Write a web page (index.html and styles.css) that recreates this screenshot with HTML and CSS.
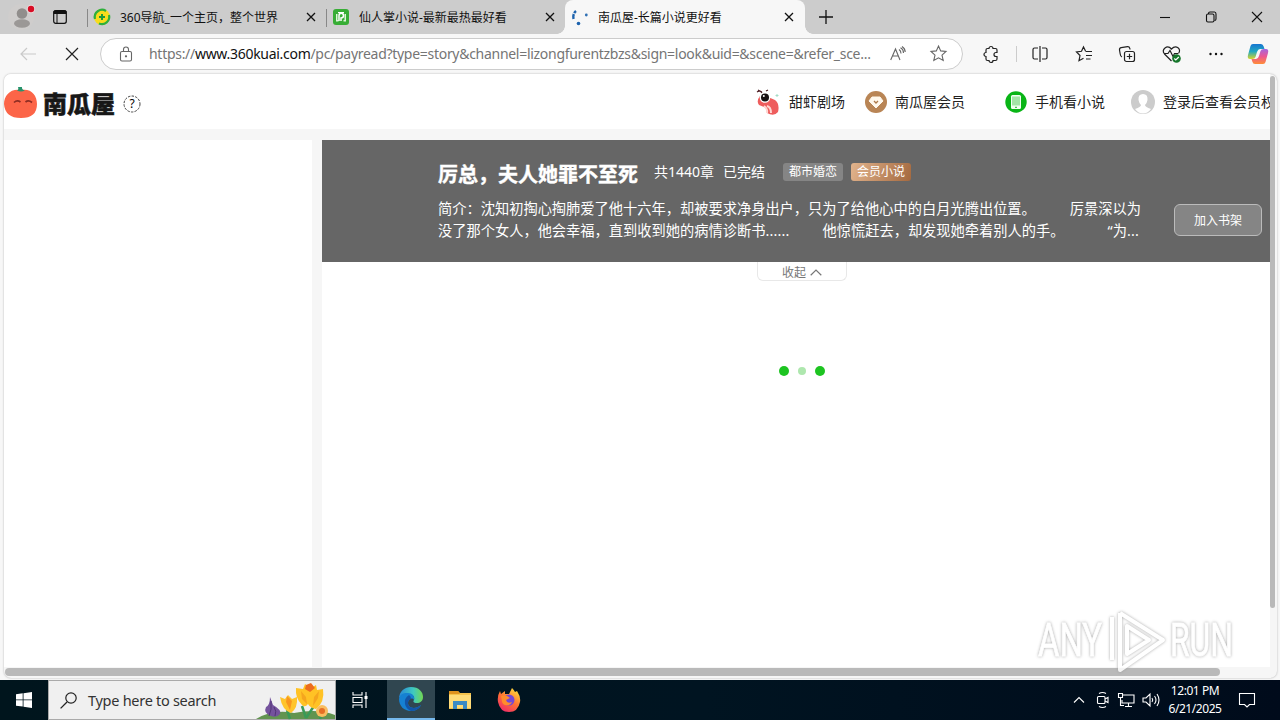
FILE: index.html
```html
<!DOCTYPE html>
<html lang="zh-CN">
<head>
<meta charset="utf-8">
<title>南瓜屋-长篇小说更好看</title>
<link rel="stylesheet" href="styles.css">
</head>
<body>
<header class="tabs">
  <div class="tab-tools">
    <svg class="profile" width="28" height="28" viewBox="0 0 28 28"><circle cx="14" cy="14" r="13" fill="#cfcdcc"/><circle cx="15" cy="10.500" r="5.300" fill="#918e8c"/><ellipse cx="15" cy="20.500" rx="8" ry="4.200" fill="#9b9896"/><circle cx="24" cy="6" r="4.200" fill="#eadada"/><circle cx="24" cy="6" r="3.200" fill="#d80d25"/></svg>
    <svg class="tabmenu" width="14" height="14" viewBox="0 0 14 14"><rect x=".7" y=".7" width="12.600" height="12.600" rx="2" fill="none" stroke="#111" stroke-width="1.200"/><path d="M1 1h12v2.500H1zM4 4v9" fill="#111" stroke="#111"/></svg>
  </div>
  <div class="tab tab-one">
    <svg width="16" height="16" viewBox="0 0 16 16"><circle cx="8" cy="8" r="8" fill="#f7dc1b"/><path d="M1 10A7.300 7.300 0 0 1 12 2" fill="none" stroke="#2eaf3c" stroke-width="2.200"/><path d="M15 6A7.300 7.300 0 0 1 5 14.500" fill="none" stroke="#2eaf3c" stroke-width="2.200"/><path d="M8 5v6M5 8h6" stroke="#1c9b39" stroke-width="2"/></svg>
    <span class="tab-title">360导航_一个主页，整个世界</span>
    <svg class="close" width="10" height="10" viewBox="0 0 10 10"><path d="M1 1l8 8M9 1L1 9"/></svg>
  </div>
  <div class="tab tab-two">
    <svg width="16" height="16" viewBox="0 0 16 16"><rect width="16" height="16" rx="3" fill="#37ad35"/><path d="M3 5h1.500V12H3zM11.500 5H13v7h-1.500zM3 11h2.500v1.500H3zM10.500 11H13v1.500h-2.500z" fill="#dff6d9"/><path d="M6 12V6.500a2 2 0 0 1 4.500 0Q10.500 9 8 9v3" fill="none" stroke="#fff" stroke-width="1.500"/><path d="M5 3h6v1.200H5z" fill="#fff"/></svg>
    <span class="tab-title">仙人掌小说-最新最热最好看</span>
    <svg class="close" width="10" height="10" viewBox="0 0 10 10"><path d="M1 1l8 8M9 1L1 9"/></svg>
  </div>
  <div class="tab tab-active">
    <svg width="18" height="18" viewBox="0 0 18 18"><path d="M2.500 11Q1.500 6 5 3" fill="none" stroke="#1d63ae" stroke-width="2.400" stroke-dasharray="5 1"/><circle cx="7.500" cy="15.500" r="1.800" fill="#1d63ae"/><circle cx="15.300" cy="7" r="1.400" fill="#2f70b4"/></svg>
    <span class="tab-title">南瓜屋-长篇小说更好看</span>
    <svg class="close" width="10" height="10" viewBox="0 0 10 10"><path d="M1 1l8 8M9 1L1 9"/></svg>
  </div>
  <svg class="newtab" width="14" height="14" viewBox="0 0 14 14"><path d="M7 0v14M0 7h14"/></svg>
  <div class="window-controls">
    <svg width="12" height="12" viewBox="0 0 12 12"><path d="M1 6.500h10"/></svg>
    <svg width="12" height="12" viewBox="0 0 12 12"><rect x="1.500" y="3" width="7.500" height="8" rx="1.500"/><path d="M3.500 3V2.500Q3.500 1 5 1h4.500Q11 1 11 3v5q0 1.500-1.500 1.500"/></svg>
    <svg width="12" height="12" viewBox="0 0 12 12"><path d="M1 1l10 10M11 1L1 11"/></svg>
  </div>
</header>
<div class="toolbar">
  <svg class="back" width="16" height="14" viewBox="0 0 16 14"><path d="M7 1L1 7l6 6M1 7h15"/></svg>
  <svg class="stop" width="14" height="14" viewBox="0 0 14 14"><path d="M1 1l12 12M13 1L1 13"/></svg>
  <div class="address">
    <svg class="lock" width="14" height="16" viewBox="0 0 14 16"><rect x="1.500" y="5.500" width="11" height="9.500" rx="1.500"/><path d="M4.500 5.500V3.500a2.500 2.500 0 0 1 5 0v2"/><circle cx="7" cy="10.300" r=".6" fill="#555"/></svg>
    <span class="url">https://<b>www.360kuai.com</b>/pc/payread?type=story&amp;channel=lizongfurentzbzs&amp;sign=look&amp;uid=&amp;scene=&amp;refer_sce...</span>
    <svg class="read" width="16" height="15" viewBox="0 0 16 15"><path d="M.7 14L5.500 3 10 14M2.500 10h6M9 3.500q2 1.200 2 4M10.500 1.800q3 1.500 3 5.200M12 .5q3.200 2 3.200 5.500"/></svg>
    <svg class="star" width="17" height="17" viewBox="0 0 17 17"><path d="M8.500 1l2.200 4.900 5.300.6-4 3.600 1.200 5.400-4.700-2.700-4.700 2.700L5 10.100 1 6.500l5.300-.6z"/></svg>
  </div>
  <div class="actions">
    <svg width="18" height="18" viewBox="0 0 18 18"><path d="M5.500 3.500H7a2 2 0 0 1 4 0h2.500Q15 3.500 15 5v2.500h-1a2 2 0 0 0 0 4h1V14q0 1.500-1.500 1.500H11a2 2 0 0 1-4 0H5.500Q4 15.500 4 14v-2.500a2 2 0 0 1 0-4V5q0-1.500 1.500-1.500z"/></svg>
    <i class="divider"></i>
    <svg width="18" height="18" viewBox="0 0 18 18"><path d="M7 3H3.500Q2 3 2 4.500v8Q2 14 3.500 14H7M11 3h3.500Q16 3 16 4.500v8q0 1.500-1.500 1.500H11M9 1v16"/></svg>
    <svg width="18" height="18" viewBox="0 0 18 18"><path d="M10.500 6L8.500 2 6.500 6.300 1.500 7 5 10.500 4 15.700l4.500-2.500M10.500 6.500H17M11 10.500h6M11 14h4.500"/></svg>
    <svg width="18" height="18" viewBox="0 0 18 18"><rect x="6.500" y="6.500" width="10" height="10" rx="2"/><path d="M11.500 8.800v5.400M8.800 11.500h5.400M4 12Q2.500 11.500 2.200 9L1.500 5q-.2-2 1.700-2.300L9.500 1.600q1.800-.2 2.300 1.700L12 4.500"/></svg>
    <svg width="20" height="18" viewBox="0 0 20 18"><path d="M9.500 16L2.500 9C-1 4.500 5-1 9.500 4 14-1 20 4 16.500 8.500M2 8.500h4l2-3 3 6 1.500-3H16"/><circle cx="14.500" cy="13.500" r="4.300" fill="#16762b" stroke="none"/><path d="M12.300 13.500l1.500 1.500 3-3" stroke="#fff"/></svg>
    <svg width="18" height="18" viewBox="0 0 18 18"><g fill="#111" stroke="none"><circle cx="3.500" cy="9" r="1.200"/><circle cx="9" cy="9" r="1.200"/><circle cx="14.500" cy="9" r="1.200"/></g></svg>
    <svg class="copilot" width="22" height="22" viewBox="0 0 22 22"><defs><linearGradient id="cpA" x2="0" y2="1"><stop stop-color="#1675d1"/><stop offset=".5" stop-color="#22a9c0"/><stop offset="1" stop-color="#d8d52b"/></linearGradient><linearGradient id="cpB" x2="0" y2="1"><stop stop-color="#a465df"/><stop offset=".5" stop-color="#ec5792"/><stop offset="1" stop-color="#ff8d36"/></linearGradient></defs><g stroke="none"><path d="M6 1h8q2 0 2.700 2.500L17.500 6H13q-2 0-3 3l-1.500 5Q8 16 5 16H3q-3 0-2-4L3.500 3Q4 1 6 1z" fill="url(#cpA)"/><path d="M16 21H8q-2 0-2.700-2.500L4.500 16H9q2 0 3-3l1.500-5Q14 6 17 6h2q3 0 2 4l-2.500 9Q18 21 16 21z" fill="url(#cpB)"/></g></svg>
  </div>
</div>
<div class="frame">
  <div class="page">
    <div class="site-header">
      <svg class="pumpkin" width="34" height="34" viewBox="0 0 34 34"><path d="M17 4C27 2 33 9 33 18q0 14-16 14T0 18C0 9 7 2 17 4z" fill="#fc6548"/><path d="M13 4.500Q15 3.500 14 1h4q-.5 2.500 3 3.500-4 2-8 0z" fill="#28936c"/><path d="M10 16.500q3-3 6.500-.5M21.500 16q3-2.500 6.500.5" fill="none" stroke="#8f2d23" stroke-width="1.700"/></svg>
      <span class="brand">南瓜屋</span>
      <svg class="help" width="18" height="18" viewBox="0 0 18 18"><circle cx="9" cy="9" r="8" fill="none" stroke="#444" stroke-dasharray="2.500 1.200"/><text x="9" y="13" text-anchor="middle">?</text></svg>
      <nav class="site-nav">
        <a class="nav-shrimp"><svg width="26" height="28" viewBox="0 0 26 28"><path d="M5 8Q1 13 4 17l5 2q2 0 3 6 7 4 11-1 2-8-3-12l-7-3z" fill="#ee5d5d"/><path d="M12 18q4 1 4 7M9 18q4 3 3 7" stroke="#ffd7d2" stroke-width="2" fill="none"/><circle cx="10" cy="9.500" r="5.300" fill="#fff"/><circle cx="10" cy="9.500" r="4" fill="#171213"/><circle cx="8.800" cy="8" r="1" fill="#fff"/><path d="M2 4q3-2 5 1M3 2l4 2M11 3l2-1" fill="none" stroke="#51242a" stroke-width="1.200"/><path d="M22 6v3M20.500 7.500h3" stroke="#a5dcc7"/></svg><span>甜虾剧场</span></a>
        <a class="nav-member"><svg width="22" height="22" viewBox="0 0 22 22"><circle cx="11" cy="11" r="11" fill="#b98555"/><path d="M7 6h8l3 4-7 7-7-7z" fill="#fff8ec" stroke="#fff8ec" stroke-linejoin="round"/><path d="M9 10l2 2 2-2" fill="none" stroke="#ad7848" stroke-width="1.300"/></svg><span>南瓜屋会员</span></a>
        <a class="nav-phone"><svg width="22" height="22" viewBox="0 0 22 22"><circle cx="11" cy="11" r="10.700" fill="#09b516"/><rect x="6" y="4" width="10" height="14" rx="1.500" fill="#effff0"/><path d="M7 5.500h8v9H7z" fill="#a3e5a7"/><path d="M10 16.300h2" stroke="#24b52e"/></svg><span>手机看小说</span></a>
        <a class="nav-user"><svg width="24" height="24" viewBox="0 0 24 24"><circle cx="12" cy="12" r="12" fill="#ccc"/><path d="M12 4q5 0 4.500 6-.5 3-2.500 5 0 2 6 4-3.500 4.500-8 4.500T4 19q6-2 6-4-2-2-2.500-5Q7 4 12 4z" fill="#fff"/></svg><span>登录后查看会员权</span></a>
      </nav>
    </div>
    <div class="content">
      <aside></aside>
      <main>
        <section class="book">
          <div class="info">
            <div class="book-head"><h1>厉总，夫人她罪不至死</h1><span class="chapters">共1440章</span><span class="done">已完结</span><span class="tag">都市婚恋</span><span class="tag tag-vip">会员小说</span></div>
            <p class="line-one"><span>简介：沈知初掏心掏肺爱了他十六年，却被要求净身出户，只为了给他心中的白月光腾出位置。</span><span>厉景深以为</span></p>
            <p class="line-two"><span>没了那个女人，他会幸福，直到收到她的病情诊断书<i>......</i></span><span>他惊慌赶去，却发现她牵着别人的手。</span><span><i>“</i>为<i>...</i></span></p>
          </div>
          <button>加入书架</button>
        </section>
        <div class="collapse"><span>收起</span><svg width="12" height="7" viewBox="0 0 12 7"><path d="M.7 6.200L6 1l5.300 5.200" fill="none" stroke="#777" stroke-width="1.200"/></svg></div>
        <div class="loader"><i></i><i class="small"></i><i></i></div>
      </main>
    </div>
    <div class="hscroll"><i></i></div>
  </div>
  <div class="vscroll"><i></i></div>
</div>
<svg class="watermark" width="200" height="70" viewBox="0 0 200 70"><g class="mark"><text x="2" y="50" textLength="64" lengthAdjust="spacingAndGlyphs">ANY</text><text x="134" y="50" textLength="63" lengthAdjust="spacingAndGlyphs">RUN</text><path d="M76 11v43M84 7v57L127 34 84 7M91 20v28l22-14z"/></g></svg>
<footer class="taskbar">
  <div class="start"><svg width="16" height="16" viewBox="0 0 16 16"><path d="M0 2.200L6.700 1.300v6.200H0zM7.500 1.200L16 0v7.500H7.500zM0 8.300h6.700v6.300L0 13.700zM7.500 8.300H16V16l-8.500-1.200z" fill="#fff"/></svg></div>
  <div class="search">
    <svg width="17" height="17" viewBox="0 0 17 17"><circle cx="11" cy="6" r="5.200" fill="none" stroke="#222" stroke-width="1.200"/><path d="M7 10L.6 16.400" stroke="#222" stroke-width="1.300"/></svg>
    <span>Type here to search</span>
    <svg class="flowers" width="80" height="38" viewBox="0 0 80 38"><path d="M1 38Q18 28 39 32q24-5 41 2v4z" fill="#629450"/><path d="M35 38L32 29M51 37l-4-12M51 37l8-12M65 38l2-7" stroke="#3a9a58" stroke-width="2.500"/><path d="M15 16l3 8q9 5 7 9-3 4-9 2-8-3-5-9 4-2 4-10z" fill="#74529d"/><path d="M16 20q1 9-2 15M19 26q3 4 1 9" stroke="#513576" fill="none"/><path d="M25 16l5 2 3-4 4 4 5-2q1 11-6 16-9-3-11-16z" fill="#ffc42c"/><path d="M32 15l5 5-2 9-4-8z" fill="#f89620"/><path d="M41 7l7 1 2-5 6 4 5-3 1 5 6-1q2 13-7 20-6-1-8-5-3 4-6 1-7-7-6-17z" fill="#ffc225"/><path d="M46 10l5 6 1 7-5-5zM64 10l-5 6-1 9 5-8z" fill="#f5a51e"/><path d="M51 4l5-2 4 5-5 4-5-3z" fill="#ec6d1f"/><circle cx="67" cy="30" r="6" fill="#f9bd60"/><circle cx="67" cy="30" r="3" fill="#e66f25"/></svg>
  </div>
  <div class="taskview"><svg width="18" height="18" viewBox="0 0 18 18"><path d="M2 1v3h9V1M2 17v-3h9v3M2 6.500h9v5H2zM15 1v16" fill="none" stroke="#fff" stroke-width="1.100"/><path d="M13.500 5h3v3h-3z" fill="#fff"/></svg></div>
  <div class="edge"><svg width="24" height="24" viewBox="0 0 24 24"><defs><linearGradient id="eg"><stop stop-color="#2786d9"/><stop offset=".6" stop-color="#3fc9bf"/><stop offset="1" stop-color="#72d752"/></linearGradient></defs><path d="M0 12C0 4 6 0 12 0c8 0 12 5 12 10 0 4-3 6-6 6-4 0-4-2-3-3 1-3-1-6-5-6C5 7 0 9 0 12z" fill="url(#eg)"/><path d="M0 12C1 6 6 6 9 6c4 0 7 3 6 7-2-3-6-1-6 3 0 5 7 7 13 2-2 4-6 6-10 6C5 24 0 19 0 12z" fill="#1681d2"/><path d="M10 8q-5 3-4 9 1 5 6 7 7 0 10-6c-6 5-13 3-13-2q0-3 3-4 0-3-2-4z" fill="#1355a7"/></svg></div>
  <div class="explorer"><svg width="22" height="20" viewBox="0 0 22 20"><path d="M0 1h9l2 2h11v16H0z" fill="#f5c34c"/><path d="M0 1h9l2 3H0z" fill="#df931e"/><path d="M0 5h22v13H0z" fill="#ffdc78"/><path d="M4 19v-8h14v8h-4v-4H8v4z" fill="#3c8bc5"/></svg></div>
  <div class="firefox"><svg width="24" height="24" viewBox="0 0 24 24"><defs><linearGradient id="ff" x1=".8" y1="0" x2=".2" y2="1"><stop stop-color="#ffe13c"/><stop offset=".5" stop-color="#ff7133"/><stop offset="1" stop-color="#ef286c"/></linearGradient></defs><path d="M3 3l1 3 4-3v3h4l3-6q2 2 3 4l2-1q4 6 3 11-2 10-11 10T1 14Q0 8 3 3z" fill="url(#ff)"/><circle cx="12" cy="12" r="5.500" fill="#7548d6"/><path d="M4 8q5-2 9 2l-4 2q1 4 6 2c-2 5-10 4-10-1z" fill="#ff8d2c"/></svg></div>
  <div class="tray">
    <svg width="12" height="8" viewBox="0 0 12 8"><path d="M1 6.500l5-5 5 5"/></svg>
    <svg width="14" height="18" viewBox="0 0 14 18"><rect x="1.500" y="5.500" width="7.500" height="7" rx="1"/><path d="M9 8l3-1.500v5L9 10M3 2.500q3.500-2 7 0M3 15.500q3.500 2 7 0"/></svg>
    <svg width="18" height="16" viewBox="0 0 18 16"><path d="M6 3h11v8H5V8M8 14.500h7M11.500 11v3.500M1.500 1.500h4v4h-4zM3.500 5.500v8H7"/></svg>
    <svg width="18" height="16" viewBox="0 0 18 16"><path d="M1 6h3l4-4v12l-4-4H1zM10 6q1.500 2 0 4M12.500 4q3 4 0 8M15 2q4 6 0 12"/></svg>
    <div class="clock"><span>12:01 PM</span><span>6/21/2025</span></div>
    <svg class="notice" width="18" height="18" viewBox="0 0 18 18"><path d="M1.500 2.500h15v11h-5L9 16l-2.500-2.500h-5z"/></svg>
  </div>
</footer>
</body>
</html>
```

FILE: styles.css
```css
* { box-sizing: border-box; }
body { width: 1280px; height: 720px; margin: 0; overflow: hidden; display: flex; flex-direction: column; background: #f7f7f7; color: #222; font: 12px "Noto Sans", "Noto Sans CJK SC", sans-serif; }
svg { display: block; flex: none; overflow: visible; }
span { white-space: nowrap; }
i { font-style: normal; }

.tabs { height: 34px; flex: none; display: flex; align-items: center; background: #ccc; color: #111; }
.tab-tools { width: 87px; display: flex; align-items: center; gap: 18px; padding-left: 7px; }
.tab { height: 34px; display: flex; align-items: center; }
.tab-title { margin-top: -1px; }
.tab .close { margin-left: auto; stroke: #111; stroke-width: 1.300; }
.tab-one { width: 239px; padding: 0 10px 0 7px; gap: 10px; background: linear-gradient(#888, #888) 0 9px / 1px 18px no-repeat; }
.tab-two { width: 239px; padding: 0 10px 0 7px; gap: 10px; background: linear-gradient(#888, #888) 0 9px / 1px 18px no-repeat; }
.tab-active { width: 240px; padding: 0 11px 0 6px; gap: 9px; background: #f7f7f7; border-radius: 8px 8px 0 0; position: relative; }
.tab-active::before, .tab-active::after { content: ""; position: absolute; bottom: 0; width: 8px; height: 8px; }
.tab-active::before { left: -8px; background: radial-gradient(circle at 0 0, #ccc 7.500px, #f7f7f7 8px); }
.tab-active::after { right: -8px; background: radial-gradient(circle at 100% 0, #ccc 7.500px, #f7f7f7 8px); }
.newtab { margin-left: 14px; stroke: #111; stroke-width: 1.300; }
.window-controls { display: flex; gap: 34px; margin-left: auto; padding-right: 17px; fill: none; stroke: #111; stroke-width: 1.100; }

.toolbar { height: 39px; flex: none; display: flex; align-items: center; }
.toolbar svg { fill: none; stroke: #222; stroke-width: 1.200; }
.toolbar .back { margin-left: 20px; stroke: #c9c9c9; }
.stop { margin-left: 29px; }
.address { display: flex; align-items: center; width: 863px; height: 32px; margin-left: 21px; padding: 0 15px 0 18px; border: 1px solid #ccc; border-radius: 16px; background: #fff; }
.toolbar .address svg { stroke: #666; stroke-width: 1.100; }
.url { width: 722px; margin-left: 16px; color: #757575; font-size: 14px; letter-spacing: -.29px; }
.url b { font-weight: 400; color: #111; }
.read { margin-left: 19px; }
.star { margin-left: auto; }
.actions { display: flex; align-items: center; margin-left: 19px; gap: 25.500px; }
.divider { width: 1px; height: 16px; margin: 0 -11px 0 -10px; background: #ccc; }
.toolbar .copilot { margin-left: -4px; }

.frame { width: 1273px; height: 604px; margin: 1px 0 2px 4px; flex: none; display: flex; background: #f6f6f6; border-radius: 7px; overflow: hidden; box-shadow: 0 0 2px #aaa; }
.page { width: 1266px; display: flex; flex-direction: column; overflow: hidden; }
.site-header { height: 55px; flex: none; display: flex; align-items: center; background: #fff; }
.pumpkin { margin-top: 3px; }
.brand { width: 75px; margin: 2px 0 0 5px; color: #171717; font: 900 24px/34px "Noto Sans CJK SC", sans-serif; -webkit-text-stroke: .5px #171717; }
.help { margin-top: 5px; margin-left: 5px; font-size: 12px; transform: translateX(3px); }
.site-nav { display: flex; align-items: center; margin-left: 617px; font-size: 14px; }
.site-nav a { display: flex; align-items: center; flex: none; }
.site-nav a span { margin-top: -2px; }
.nav-shrimp { width: 110px; gap: 8px; }
.nav-member { width: 140px; gap: 8px; }
.nav-phone { width: 126px; gap: 8px; }
.nav-user { gap: 8px; }
.content { display: flex; gap: 10px; height: 527px; margin-top: 11px; }
aside { width: 308px; background: #fff; }
main { width: 948px; display: flex; flex-direction: column; align-items: center; background: #fff; }
.book { width: 948px; height: 122px; display: flex; padding: 0 8px 0 116px; background: #666; color: #fff; flex: none; }
.info { width: 736px; padding-top: 20px; }
.book-head { display: flex; align-items: center; height: 25px; margin-bottom: 13px; font-size: 14px; }
h1 { width: 200px; margin: 1px 16px 0 0; font: 700 20px/25px "Noto Sans CJK SC", sans-serif; -webkit-text-stroke: .4px #fff; white-space: nowrap; }
.chapters { width: 69px; margin-top: -3px; }
.done { width: 60px; margin-top: -3px; }
.tag { width: 60px; height: 18px; margin-right: 8px; margin-top: -2px; border-radius: 3px; background: #858585; text-align: center; font-size: 12px; line-height: 17px; }
.tag-vip { background: linear-gradient(110deg, #e2b48d, #a4693f); }
.book p { display: flex; height: 22px; margin: 0; font-size: 14.240px; line-height: 22px; }
.line-one span + span { margin-left: 34px; }
.line-two span + span { margin-left: 33px; }
.line-two span + span + span { margin-left: 43px; }
.line-two i { letter-spacing: .2px; }
.book button { width: 88px; height: 32px; margin-top: 64px; padding: 0; border: 1px solid #bbb; border-radius: 6px; background: #858585; color: #fff; font: inherit; }
.collapse { width: 90px; height: 19px; flex: none; display: flex; align-items: center; justify-content: center; gap: 4px; margin-left: 12px; padding-top: 2px; border: 1px solid #e8e8e8; border-top: 0; border-radius: 0 0 6px 6px; color: #777; }
.loader { display: flex; align-items: center; gap: 9px; margin: 85px 0 0 12px; }
.loader i { width: 10px; height: 10px; border-radius: 50%; background: #1dc421; }
.loader .small { width: 8px; height: 8px; background: #aee7ae; }
.hscroll { height: 11px; padding: 1px; flex: none; }
.hscroll i { display: block; width: 1215px; height: 8px; border-radius: 4px; background: #b9b9b9; }
.vscroll { width: 7px; }
.vscroll i { display: block; width: 5px; height: 532px; margin-top: 2px; border-radius: 3px; background: #b9b9b9; }
.watermark { position: absolute; left: 1036px; top: 606px; opacity: .85; }
.mark { filter: drop-shadow(0 0 1.500px #999); fill: #fff; stroke: #fff; stroke-width: .8; font: 46px Roboto, sans-serif; }
.mark path { fill: none; stroke: #fff; stroke-width: 4; stroke-linejoin: round; }

.taskbar { height: 40px; flex: none; display: flex; align-items: center; background: linear-gradient(90deg, #00151d, #001421 55%, #000b1b); color: #fff; }
.taskbar > div { height: 40px; display: flex; align-items: center; justify-content: center; }
.start { width: 48px; }
.taskbar .search { width: 288px; justify-content: flex-start; padding-left: 11px; gap: 11px; border: 1px solid #aaa; background: #f0f0f0; color: #333; font-size: 14.500px; letter-spacing: -.28px; }
.flowers { margin-left: auto; }
.taskbar .taskview { width: 51px; padding-right: 4px; }
.edge { width: 48px; background: #304650; border-bottom: 2px solid #76b9ed; }
.explorer, .firefox { width: 49px; }
.taskbar .tray { margin-left: auto; padding-right: 24px; gap: 0; fill: none; stroke: #fff; stroke-width: 1.100; }
.tray svg { margin-right: 11px; }
.tray svg:nth-of-type(2), .tray svg:nth-of-type(3) { margin-right: 7px; }
.tray svg:nth-of-type(4) { margin-right: 8px; }
.clock { width: 54px; display: flex; flex-direction: column; align-items: center; font-size: 12px; line-height: 18px; letter-spacing: -.45px; }
.tray .notice { margin: 0 0 0 16px; }
```
